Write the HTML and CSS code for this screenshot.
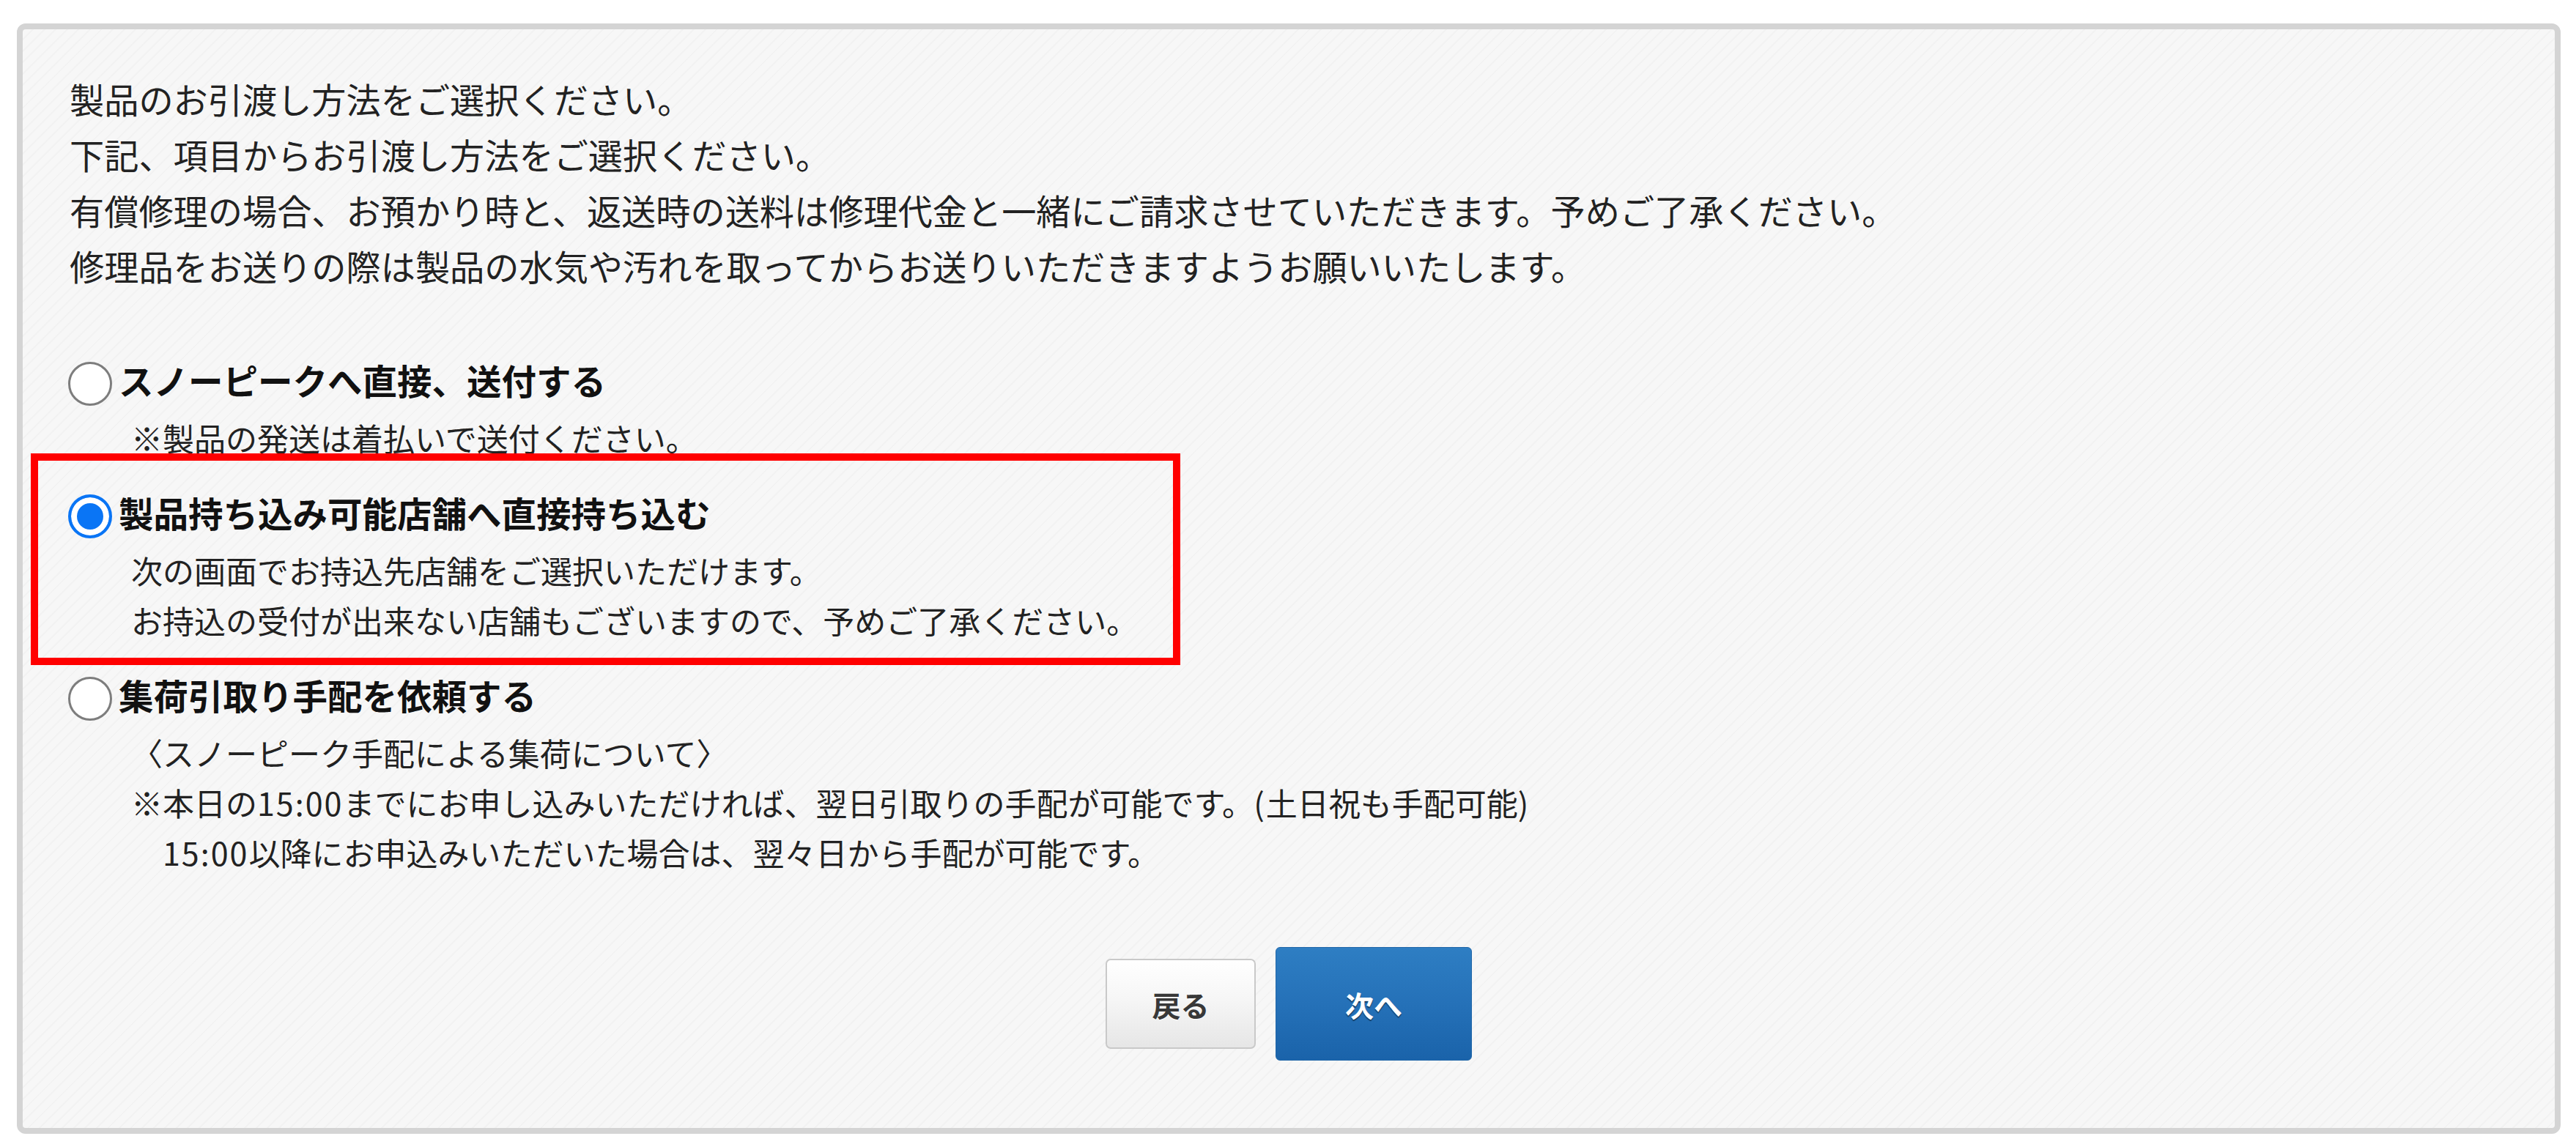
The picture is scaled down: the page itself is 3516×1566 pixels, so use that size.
FILE: index.html
```html
<!DOCTYPE html>
<html lang="ja">
<head>
<meta charset="utf-8">
<title>お引渡し方法の選択</title>
<link rel="stylesheet" href="styles.css">
</head>
<body>
<div class="panel">
  <div class="intro">
    <p>製品のお引渡し方法をご選択ください。</p>
    <p>下記、項目からお引渡し方法をご選択ください。</p>
    <p>有償修理の場合、お預かり時と、返送時の送料は修理代金と一緒にご請求させていただきます。予めご了承ください。</p>
    <p>修理品をお送りの際は製品の水気や汚れを取ってからお送りいただきますようお願いいたします。</p>
  </div>

  <div class="options">
    <div class="option">
      <label class="opt-row">
        <input type="radio" name="delivery" class="radio">
        <span class="opt-label">スノーピークへ直接、送付する</span>
      </label>
      <div class="note">
        <p>※製品の発送は着払いで送付ください。</p>
      </div>
    </div>

    <div class="option option-marked">
      <div class="red-frame"></div>
      <label class="opt-row">
        <input type="radio" name="delivery" class="radio" checked>
        <span class="opt-label">製品持ち込み可能店舗へ直接持ち込む</span>
      </label>
      <div class="note">
        <p>次の画面でお持込先店舗をご選択いただけます。</p>
        <p>お持込の受付が出来ない店舗もございますので、予めご了承ください。</p>
      </div>
    </div>

    <div class="option">
      <label class="opt-row">
        <input type="radio" name="delivery" class="radio">
        <span class="opt-label">集荷引取り手配を依頼する</span>
      </label>
      <div class="note">
        <p>〈スノーピーク手配による集荷について〉</p>
        <p>※本日の<span class="num">15:00</span>までにお申し込みいただければ、翌日引取りの手配が可能です。<span class="num">(</span>土日祝も手配可能<span class="num">)</span></p>
        <p>　<span class="num">15:00</span>以降にお申込みいただいた場合は、翌々日から手配が可能です。</p>
      </div>
    </div>
  </div>

  <div class="actions">
    <button type="button" class="btn btn-back">戻る</button>
    <button type="button" class="btn btn-next">次へ</button>
  </div>
</div>
</body>
</html>
```

FILE: styles.css
```css
html, body {
  margin: 0;
  padding: 0;
  background: #ffffff;
}

body {
  font-family: "Noto Sans CJK JP", "Noto Sans", sans-serif;
  color: #222222;
}

p {
  margin: 0;
}

.panel {
  box-sizing: border-box;
  width: 3472px;
  margin: 32px 0 0 23px;
  border: 8px solid #d4d4d4;
  border-radius: 12px;
  padding: 57px 64px 92px 64px;
  background-color: #f7f7f7;
  background-image: repeating-linear-gradient(135deg,
    #f7f7f7 0px, #f7f7f7 9px, #f2f2f2 9px, #f2f2f2 11px);
}

.intro {
  font-size: 47.2px;
  line-height: 76px;
}

.options {
  margin-top: 80px;
  display: flex;
  flex-direction: column;
  gap: 31px;
}

.option {
  position: relative;
}

.opt-row {
  display: flex;
  align-items: flex-start;
  gap: 9px;
  cursor: pointer;
}

.radio {
  -webkit-appearance: none;
  appearance: none;
  box-sizing: border-box;
  width: 60px;
  height: 60px;
  margin: 13px 0 0 -2px;
  border-radius: 50%;
  border: 3px solid #7d7d7d;
  background: #ffffff;
  flex: none;
}

.radio:checked {
  border: 4px solid #0a75f5;
  background: #0a75f5;
  box-shadow: inset 0 0 0 8px #ffffff;
}

.opt-label {
  font-size: 47.5px;
  line-height: 76px;
  font-weight: 700;
  color: #111111;
}

.note {
  margin-top: 6px;
  padding-left: 84px;
  font-size: 43px;
  line-height: 68px;
}

.num {
  letter-spacing: 2px;
}

.red-frame {
  position: absolute;
  top: -43px;
  left: -53px;
  width: 1569px;
  height: 289px;
  box-sizing: border-box;
  border: 10px solid #ff0000;
  pointer-events: none;
}

.actions {
  margin-top: 96px;
  display: flex;
  justify-content: center;
  align-items: center;
  gap: 27px;
}

.btn {
  font-family: "Noto Sans CJK JP", "Noto Sans", sans-serif;
  font-weight: 700;
  font-size: 39px;
  box-sizing: border-box;
  cursor: pointer;
  padding: 0;
}

.btn-back {
  width: 205px;
  height: 123px;
  border: 2px solid #c9c9c9;
  border-radius: 7px;
  background: linear-gradient(#ffffff 0%, #f6f6f6 45%, #e6e6e6 100%);
  color: #383838;
  text-shadow: 0 1px 0 #ffffff;
}

.btn-next {
  width: 268px;
  height: 155px;
  border: 1px solid #2066a8;
  border-radius: 6px;
  background: linear-gradient(#2e7ec3 0%, #2571b8 50%, #1a63aa 100%);
  color: #ffffff;
  text-shadow: 0 2px 1px rgba(0, 0, 0, 0.45);
}
```
